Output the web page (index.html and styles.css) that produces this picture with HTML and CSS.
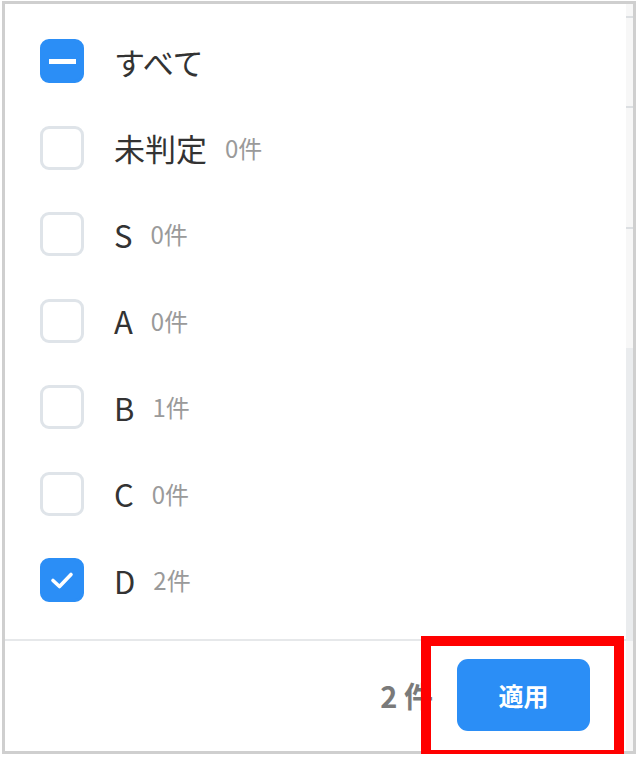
FILE: index.html
```html
<!DOCTYPE html>
<html lang="ja">
<head>
    <meta charset="UTF-8">
    <meta name="viewport" content="width=device-width, initial-scale=1.0">
    <title>ランク絞り込み</title>
    <link rel="stylesheet" href="styles.css">
</head>
<body>

    <div class="frame">
        <div class="panel">
            <ul class="option-list">
                <li class="option">
                    <span class="box box-partial"><span class="dash"></span></span>
                    <span class="label">すべて</span>
                </li>
                <li class="option">
                    <span class="box"></span>
                    <span class="label">未判定</span>
                    <span class="count">0件</span>
                </li>
                <li class="option">
                    <span class="box"></span>
                    <span class="label">S</span>
                    <span class="count">0件</span>
                </li>
                <li class="option">
                    <span class="box"></span>
                    <span class="label">A</span>
                    <span class="count">0件</span>
                </li>
                <li class="option">
                    <span class="box"></span>
                    <span class="label">B</span>
                    <span class="count">1件</span>
                </li>
                <li class="option">
                    <span class="box"></span>
                    <span class="label">C</span>
                    <span class="count">0件</span>
                </li>
                <li class="option">
                    <span class="box box-checked">
                        <svg width="26" height="20" viewBox="0 0 26 20">
                            <path d="M4 10.5 L10.5 16.5 L22 4.5" fill="none" stroke="#fff" stroke-width="3.6" stroke-linecap="round" stroke-linejoin="round"/>
                        </svg>
                    </span>
                    <span class="label">D</span>
                    <span class="count">2件</span>
                </li>
            </ul>

            <div class="panel-footer">
                <span class="total">2 件</span>
                <button type="button" class="apply-btn">適用</button>
            </div>
        </div>

        <div class="scrollbar">
            <span class="tick tick-1"></span>
            <span class="tick tick-2"></span>
            <span class="tick tick-3"></span>
            <div class="thumb"></div>
        </div>
    </div>

    <div class="highlight"></div>

</body>
</html>
```

FILE: styles.css
```css
/* Rank filter popup */
body {
    margin: 0;
    padding: 0;
    background-color: white;
    font-family: "Noto Sans CJK JP", "Noto Sans", sans-serif;
    position: relative;
}

.frame {
    width: 634px;
    height: 753px;
    margin: 1px 0 0 2px;
    box-sizing: border-box;
    border: 3px solid #cfcfcf;
    display: flex;
    background-color: white;
}

.panel {
    flex: 1;
    display: flex;
    flex-direction: column;
}

.option-list {
    list-style: none;
    margin: 0;
    padding: 14px 0 15px 35px;
}

.option {
    height: 86.5px;
    display: flex;
    align-items: center;
}

.box {
    width: 44px;
    height: 44px;
    box-sizing: border-box;
    border: 3px solid #dfe4e9;
    border-radius: 9px;
    background-color: white;
    display: flex;
    align-items: center;
    justify-content: center;
    flex-shrink: 0;
}

.box-partial,
.box-checked {
    background-color: #2b8ef6;
    border-color: #2b8ef6;
}

.dash {
    width: 27px;
    height: 5px;
    background-color: white;
}

.label {
    margin-left: 30px;
    font-size: 31px;
    color: #333;
    line-height: 1;
}

.count {
    margin-left: 18px;
    font-size: 24px;
    color: #9a9a9a;
    line-height: 1;
}

.panel-footer {
    flex: 1;
    border-top: 2px solid #e6e8ea;
    display: flex;
    align-items: center;
    justify-content: flex-end;
    padding-right: 36px;
    padding-bottom: 2px;
}

.total {
    font-size: 29px;
    font-weight: bold;
    color: #7a7a7a;
    margin-right: 24px;
}

.apply-btn {
    width: 133px;
    height: 72px;
    border: none;
    border-radius: 11px;
    background-color: #2b8ef6;
    color: white;
    font-family: inherit;
    font-size: 25px;
    font-weight: bold;
    cursor: pointer;
}

.scrollbar {
    width: 7px;
    background-color: #f7f7f7;
    position: relative;
    display: flex;
    flex-direction: column;
}

.tick {
    position: absolute;
    left: 0;
    width: 7px;
    height: 2px;
    background-color: #dcdfe2;
}

.tick-1 { top: 12px; }
.tick-2 { top: 102px; }
.tick-3 { top: 223px; }

.thumb {
    margin-top: 344px;
    height: 293px;
    background-color: #eaecee;
}

.highlight {
    position: absolute;
    left: 421px;
    top: 636px;
    width: 203px;
    height: 124px;
    box-sizing: border-box;
    border: 10px solid #ff0000;
}
```
